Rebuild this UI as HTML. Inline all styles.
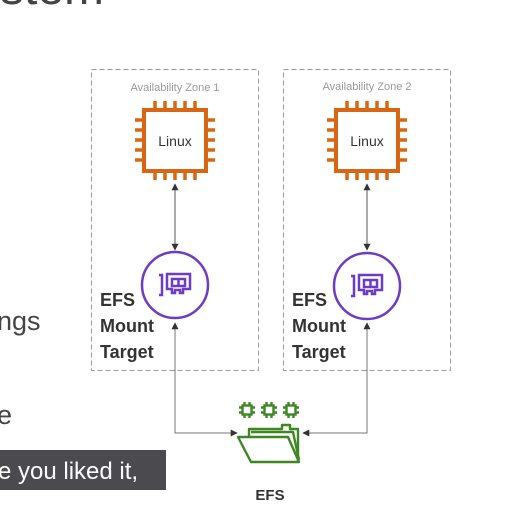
<!DOCTYPE html>
<html><head><meta charset="utf-8"><style>
html,body{margin:0;padding:0;width:518px;height:508px;overflow:hidden;background:#fff}
svg{display:block}
</style></head><body>
<svg width="518" height="508" viewBox="0 0 518 508" xmlns="http://www.w3.org/2000/svg" font-family="Liberation Sans, sans-serif">
<defs>
<marker id="ar" viewBox="0 0 10 10" refX="9" refY="5" markerWidth="7" markerHeight="7" orient="auto-start-reverse"><path d="M0,0 L10,5 L0,10 z" fill="#333"/></marker>
<g id="chip">
<rect x="-31" y="-30" width="62" height="61" fill="#fff" stroke="#d86613" stroke-width="4"/>
<g stroke="#d86613" stroke-width="3.5">
<path d="M-20,-32v-7M-10,-32v-7M0,-32v-7M10,-32v-7M20,-32v-7"/>
<path d="M-20,33v7M-10,33v7M0,33v7M10,33v7M20,33v7"/>
<path d="M-33,-20h-7M-33,-10h-7M-33,0h-7M-33,10h-7M-33,20h-7"/>
<path d="M33,-20h7M33,-10h7M33,0h7M33,10h7M33,20h7"/>
</g>
<text x="0" y="6" text-anchor="middle" font-size="14" fill="#333">Linux</text>
</g>
<g id="mt" fill="none" stroke="#6c3cc6" stroke-width="2.5">
<circle r="33"/>
<path d="M-16,-10h3v20h-3"/>
<path d="M-8,-11h23v15h-7v4h-3v-3h-5v3h-3v-4h-5z"/>
<rect x="-3" y="-6" width="13" height="7"/>
<path d="M3.5,-6v7"/>
</g>
<g id="sc" fill="none" stroke="#3f8624" stroke-width="2.4">
<rect x="-4.5" y="-4.5" width="9" height="9"/>
<path d="M-2.5,-5v-3M2.5,-5v-3M-2.5,5v3M2.5,5v3M-5,-2.5h-3M-5,2.5h-3M5,-2.5h3M5,2.5h3"/>
</g>
</defs>
<text x="0" y="4" font-size="48" fill="#444">stem</text>
<text x="-3" y="330" font-size="27" fill="#444">ngs</text>
<text x="-3" y="424" font-size="27" fill="#444">e</text>
<rect x="0" y="450" width="166" height="40" fill="#4a4a4f"/>
<text x="-2" y="479" font-size="24" fill="#fff">e you liked it,</text>

<rect x="91.5" y="69.5" width="167" height="301" fill="none" stroke="#999" stroke-dasharray="5,3"/>
<rect x="283.5" y="69.5" width="167" height="301" fill="none" stroke="#999" stroke-dasharray="5,3"/>
<text x="175" y="91" text-anchor="middle" font-size="11" fill="#999">Availability Zone 1</text>
<text x="367" y="90" text-anchor="middle" font-size="11" fill="#999">Availability Zone 2</text>

<use href="#chip" x="175" y="140"/>
<use href="#chip" x="367" y="140"/>
<line x1="175" y1="184" x2="175" y2="250" stroke="#555" marker-start="url(#ar)" marker-end="url(#ar)"/>
<line x1="367" y1="184" x2="367" y2="250" stroke="#555" marker-start="url(#ar)" marker-end="url(#ar)"/>
<use href="#mt" x="175" y="285"/>
<use href="#mt" x="367" y="286"/>

<g font-size="18" font-weight="bold" fill="#333">
<text x="100" y="306">EFS</text><text x="100" y="332">Mount</text><text x="100" y="358">Target</text>
<text x="292" y="306">EFS</text><text x="292" y="332">Mount</text><text x="292" y="358">Target</text>
</g>

<path d="M175,323V433H237" fill="none" stroke="#777" marker-start="url(#ar)" marker-end="url(#ar)"/>
<path d="M367,323V433H303" fill="none" stroke="#777" marker-start="url(#ar)" marker-end="url(#ar)"/>

<use href="#sc" x="247" y="410"/>
<use href="#sc" x="269" y="410"/>
<use href="#sc" x="291" y="410"/>
<g fill="none" stroke="#3f8624" stroke-width="2.4" stroke-linejoin="round">
<path d="M249,437V429h33v-4h8v4h8v33"/>
<path d="M251,432h42l6,28"/>
<path d="M238,437h50l11,25h-48z"/>
</g>
<text x="270" y="500" text-anchor="middle" font-size="15" font-weight="bold" fill="#333">EFS</text>
</svg>
</body></html>
